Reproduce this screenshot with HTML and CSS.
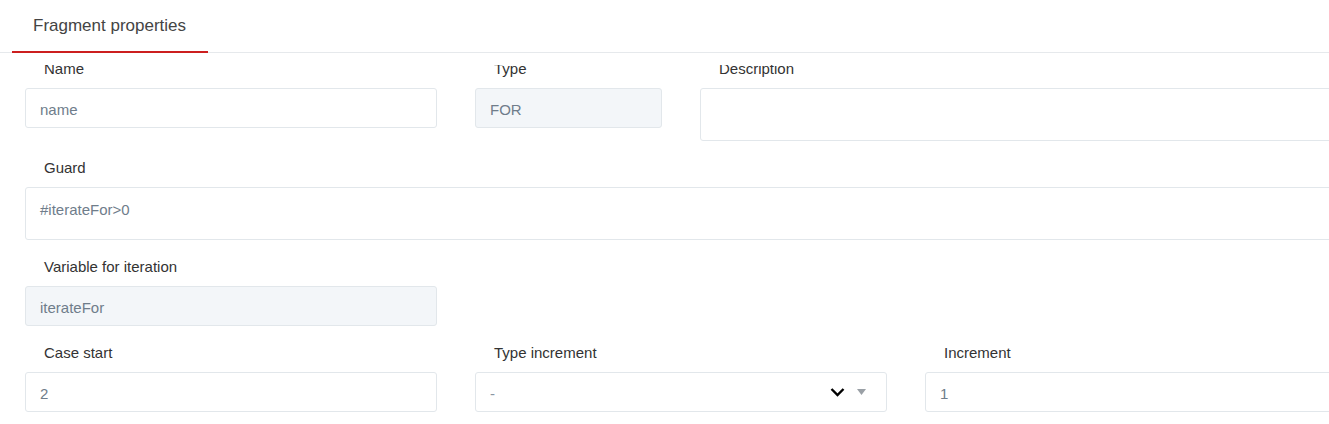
FILE: index.html
```html
<!DOCTYPE html>
<html>
<head>
    <meta name="viewport" content="width=device-width, initial-scale=1.0">
    <link rel="stylesheet" href="styles.css">
</head>
<body>
    <div class="panel">
        <div class="tabs">
            <div class="tab active">Fragment properties</div>
        </div>

        <div class="panel-body">
            <div class="form">
                <div class="row">
                    <div class="col col-4">
                        <label class="field-label">Name</label>
                        <input class="field" type="text" placeholder="name">
                    </div>
                    <div class="col col-2">
                        <label class="field-label">Type</label>
                        <input class="field" type="text" value="FOR" disabled>
                    </div>
                    <div class="col col-6">
                        <label class="field-label">Description</label>
                        <textarea class="field field-area"></textarea>
                    </div>
                </div>

                <div class="row">
                    <div class="col col-12">
                        <label class="field-label">Guard</label>
                        <textarea class="field field-area">#iterateFor&gt;0</textarea>
                    </div>
                </div>

                <div class="row">
                    <div class="col col-4">
                        <label class="field-label">Variable for iteration</label>
                        <input class="field" type="text" value="iterateFor" disabled>
                    </div>
                </div>

                <div class="row">
                    <div class="col col-4">
                        <label class="field-label">Case start</label>
                        <input class="field" type="text" value="2">
                    </div>
                    <div class="col col-4">
                        <label class="field-label">Type increment</label>
                        <div class="field select">
                            <span class="select-value">-</span>
                            <span class="select-icons">
                                <svg class="chevron" width="15" height="10" viewBox="0 0 15 10">
                                    <path d="M1.5 2 L7.5 8 L13.5 2" fill="none" stroke="#000" stroke-width="2.4"/>
                                </svg>
                                <svg class="caret" width="9" height="6" viewBox="0 0 9 6">
                                    <path d="M0 0 L9 0 L4.5 6 Z" fill="#9aa0a6"/>
                                </svg>
                            </span>
                        </div>
                    </div>
                    <div class="col col-4">
                        <label class="field-label">Increment</label>
                        <input class="field" type="text" value="1">
                    </div>
                </div>
            </div>
        </div>
    </div>
</body>
</html>
```

FILE: styles.css
```css
body {
    margin: 0;
    font-family: "Liberation Sans", Arial, sans-serif;
    background: #fff;
    color: #333;
    overflow: hidden;
}
.panel {
    width: 100%;
    height: 424px;
    overflow: hidden;
}
.tabs {
    display: flex;
    padding-left: 12px;
    border-bottom: 1px solid #e6e9ec;
    height: 52px;
}
.tab {
    padding: 0 22px 0 21px;
    font-size: 17px;
    line-height: 51px;
    color: #444;
}
.tab.active {
    border-bottom: 2px solid #cc1f1f;
    height: 51px;
}
.panel-body {
    margin-top: 12px;
    height: 359px;
    overflow: hidden;
}
.form {
    margin-top: -6px;
}
.row {
    display: flex;
    width: 1350px;
    margin-left: 6px;
}
.col {
    padding: 0 19px;
    margin-bottom: 17px;
    box-sizing: border-box;
}
.col-2 { width: 225px; }
.col-4 { width: 450px; }
.col-6 { width: 675px; }
.col-12 { width: 1350px; }
.field-label {
    display: block;
    padding-left: 19px;
    margin-bottom: 9px;
    font-size: 15px;
    line-height: 20px;
    color: #333;
}
.field {
    display: block;
    width: 100%;
    height: 40px;
    box-sizing: border-box;
    padding: 3px 15px 0 14px;
    border: 1px solid #e2e7eb;
    border-radius: 3px;
    background: #fff;
    font-family: "Liberation Sans", Arial, sans-serif;
    font-size: 15px;
    line-height: 35px;
    color: #6f7d8b;
    outline: none;
}
.field::placeholder {
    color: #6f7d8b;
}
.field:disabled {
    background: #f3f6f9;
    color: #6f7d8b;
}
.field-area {
    height: 53px;
    padding: 12px 15px 8px 14px;
    line-height: 20px;
    resize: none;
}
.select {
    display: flex;
    align-items: center;
    justify-content: space-between;
    padding: 3px 20px 0 14px;
}
.select-value {
    color: #8a96a2;
}
.select-icons {
    display: flex;
    align-items: center;
    gap: 12px;
    margin-top: -3px;
}
.chevron {
    display: block;
}
.caret {
    display: block;
}
```
